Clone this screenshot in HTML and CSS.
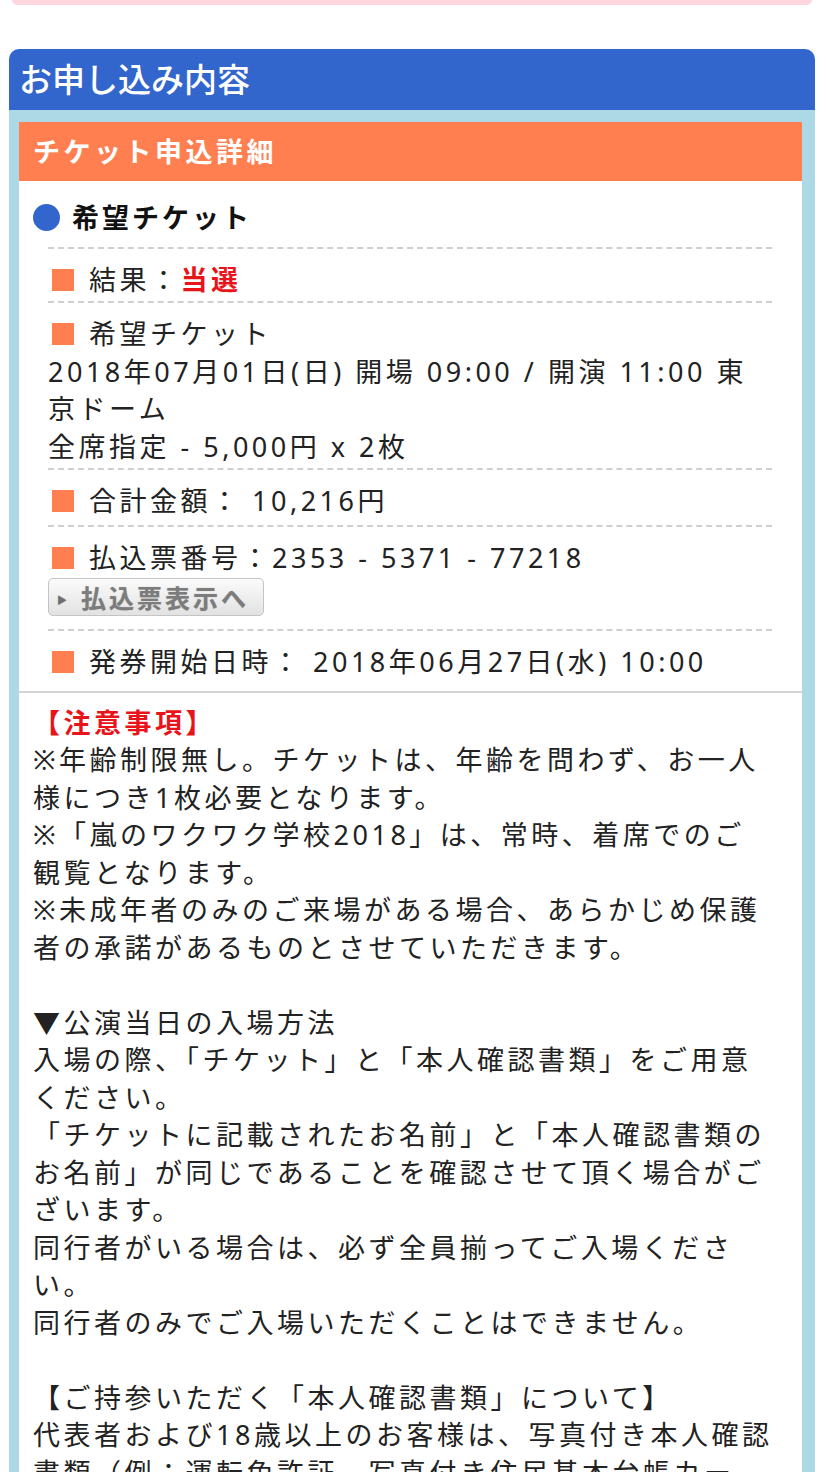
FILE: index.html
```html
<!DOCTYPE html>
<html lang="ja">
<head>
<meta charset="utf-8">
<title>お申し込み内容</title>
<link rel="stylesheet" href="styles.css">
</head>
<body>
<div class="pinkbar"></div>
<section class="box">
  <h2 class="box-title">お申し込み内容</h2>
  <div class="box-body">
    <div class="card">
      <h3 class="card-title">チケット申込詳細</h3>
      <div class="ticket">
        <h4 class="ticket-head"><span class="dot"></span>希望チケット</h4>
        <ul class="items">
          <li class="item"><span class="sq"></span>結果：<strong class="win">当選</strong></li>
          <li class="item"><span class="sq"></span>希望チケット<br>2018年07月01日(日) 開場 09:00 / 開演 11:00 東<br>京ドーム<br>全席指定 - 5,000円 x 2枚</li>
          <li class="item item-tall"><span class="sq"></span>合計金額： 10,216円</li>
          <li class="item"><span class="sq"></span>払込票番号：2353 - 5371 - 77218<br><button class="slip-btn" type="button"><span class="tri">▶</span>払込票表示へ</button></li>
          <li class="item item-last"><span class="sq"></span>発券開始日時： 2018年06月27日(水) 10:00</li>
        </ul>
      </div>
      <div class="notes">
        <p class="notes-title">【注意事項】</p>
        <p class="para">※年齢制限無し。チケットは、年齢を問わず、お一人<br>様につき1枚必要となります。<br>※「嵐のワクワク学校2018」は、常時、着席でのご<br>観覧となります。<br>※未成年者のみのご来場がある場合、あらかじめ保護<br>者の承諾があるものとさせていただきます。</p>
        <p class="para">▼公演当日の入場方法<br>入場の際、「チケット」と「本人確認書類」をご用意<br>ください。<br>「チケットに記載されたお名前」と「本人確認書類の<br>お名前」が同じであることを確認させて頂く場合がご<br>ざいます。<br>同行者がいる場合は、必ず全員揃ってご入場くださ<br>い。<br>同行者のみでご入場いただくことはできません。</p>
        <p class="para">【ご持参いただく「本人確認書類」について】<br>代表者および18歳以上のお客様は、写真付き本人確認<br>書類（例：運転免許証、写真付き住民基本台帳カー</p>
      </div>
    </div>
  </div>
</section>
</body>
</html>
```

FILE: styles.css
```css
html, body {
  margin: 0;
  padding: 0;
  background: #ffffff;
}

body {
  font-family: "Noto Sans", "Noto Sans CJK JP", sans-serif;
  color: #222222;
}

.pinkbar {
  height: 5px;
  margin: 0 16px 0 12px;
  background: #ffd6de;
  border-radius: 0 0 10px 10px;
}

.box {
  margin: 44px 13px 0 9px;
}

.box-title {
  margin: 0;
  height: 61px;
  line-height: 61px;
  padding-left: 10px;
  background: #3366cc;
  color: #ffffff;
  font-size: 33px;
  font-weight: 500;
  border-radius: 10px 10px 0 0;
}

.box-body {
  background: #add8e6;
  padding: 12px 13px 0 10px;
}

.card {
  background: #ffffff;
  overflow: hidden;
}

.card-title {
  margin: 0;
  height: 59px;
  line-height: 59px;
  padding-left: 14px;
  background: #ff7f50;
  color: #ffffff;
  font-size: 27px;
  letter-spacing: 3.5px;
  font-weight: bold;
}

.ticket {
  font-size: 27px;
  letter-spacing: 3.5px;
  line-height: 37.5px;
}

.ticket-head {
  margin: 0;
  padding: 18px 0 10px 14px;
  font-size: 27px;
  font-weight: bold;
  letter-spacing: 3px;
  color: #111111;
}

.dot {
  display: inline-block;
  width: 27px;
  height: 27px;
  border-radius: 50%;
  background: #3366cc;
  margin-right: 12px;
  vertical-align: -3px;
}

.items {
  list-style: none;
  margin: 0 30px 0 29px;
  padding: 0;
}

.item {
  border-top: 2px dashed #cfcfcf;
  padding: 12px 0 3px;
  white-space: nowrap;
}

.item-tall {
  padding-bottom: 5px;
}

.item-last {
  padding-bottom: 10px;
}

.sq {
  display: inline-block;
  width: 22px;
  height: 22px;
  background: #ff7f50;
  margin: 0 15px 0 4px;
  vertical-align: -1px;
}

.win {
  color: #e8141a;
  font-weight: bold;
}

.slip-btn {
  display: block;
  margin: 2px 0 10px;
  height: 38px;
  width: 216px;
  padding: 0 0 0 8px;
  border: 1px solid #c4c4c4;
  border-radius: 5px;
  background: linear-gradient(#fbfbfb, #e2e2e2);
  font-family: "Noto Sans CJK JP", "Noto Sans", sans-serif;
  font-size: 25px;
  font-weight: bold;
  letter-spacing: 3px;
  color: #7c7c7c;
  text-shadow: 0 0 1px rgba(120, 120, 120, 0.6);
  text-align: left;
  line-height: 36px;
}

.tri {
  font-size: 10px;
  display: inline-block;
  width: 24px;
  vertical-align: 4px;
  color: #6e6e6e;
}

.notes {
  border-top: 2px solid #d4d4d4;
  padding: 11px 14px 0;
  font-size: 27px;
  letter-spacing: 3.5px;
  line-height: 37.5px;
  white-space: nowrap;
}

.notes p {
  margin: 0;
}

.notes-title {
  color: #e8141a;
  font-weight: bold;
}

.para + .para {
  margin-top: 37.5px;
}
```
